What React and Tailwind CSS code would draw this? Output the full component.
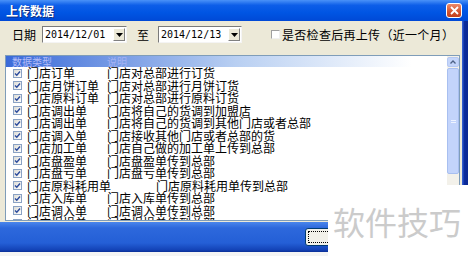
import React from 'react';

const rows = [
  ['门店订单', '门店对总部进行订货'],
  ['门店月饼订单', '门店对总部进行月饼订货'],
  ['门店原料订单', '门店对总部进行原料订货'],
  ['门店调出单', '门店将自己的货调到加盟店'],
  ['门店调出单', '门店将自己的货调到其他门店或者总部'],
  ['门店调入单', '门店接收其他门店或者总部的货'],
  ['门店加工单', '门店自己做的加工单上传到总部'],
  ['门店盘盈单', '门店盘盈单传到总部'],
  ['门店盘亏单', '门店盘亏单传到总部'],
  ['门店原料耗用单', '门店原料耗用单传到总部', true],
  ['门店入库单', '门店入库单传到总部'],
  ['门店调入单', '门店调入单传到总部'],
  ['门店报损单', '门店报损单传到总部'],
];

const CheckBox = () => (
  <span className="w-[9px] h-[9px] shrink-0 border border-[#8aa2c4] bg-[linear-gradient(135deg,#dcdcd6,#fff)] flex items-center justify-center">
    <svg width="7" height="7" viewBox="0 0 7 7">
      <path d="M1 3.5 L2.8 5.3 L6 1.5" fill="none" stroke="#2a4a9c" strokeWidth="1.4" />
    </svg>
  </span>
);

const DateBox = ({ value, w }) => (
  <div className={`h-[17px] ${w} flex items-center bg-white border border-t-[#7a7a7a] border-l-[#7a7a7a] border-b-[#f4f4f4] border-r-[#f4f4f4]`}>
    <span className="flex-1 pl-[2px] font-['DejaVu_Sans_Mono',monospace] text-[10px] leading-none text-black">{value}</span>
    <span className="w-[12px] h-[13px] mr-[1px] bg-[#ece9d8] border border-t-white border-l-white border-b-[#808080] border-r-[#808080] flex items-center justify-center">
      <svg width="7" height="4" viewBox="0 0 7 4"><path d="M0 0 H7 L3.5 4 Z" fill="#000" /></svg>
    </span>
  </div>
);

export default function App() {
  return (
    <div className="relative w-[468px] h-[256px] overflow-hidden bg-white font-['Noto_Sans_CJK_SC',sans-serif] text-[12px] text-black">
      <div className="flex flex-col h-full">
        {/* title bar */}
        <div className="h-[21px] shrink-0 flex items-center justify-between pl-[6px] pr-[6px] bg-[linear-gradient(to_bottom,#4a92f8,#0d5ee8_25%,#0055e3_60%,#0049d6)]">
          <span className="text-white font-bold text-[12px] leading-none [text-shadow:1px_1px_0_#0a2a80]">上传数据</span>
          <span className="w-[16px] h-[15px] rounded-[3px] border border-white bg-[linear-gradient(to_bottom,#ec8a6a,#d4542e_60%,#c2401c)] flex items-center justify-center">
            <svg width="9" height="9" viewBox="0 0 9 9">
              <path d="M1 1 L8 8 M8 1 L1 8" stroke="#fff" strokeWidth="1.8" />
            </svg>
          </span>
        </div>

        <div className="h-[201px] shrink-0 flex">
          {/* body */}
          <div className="w-[462px] bg-[#ece9d8] flex flex-col pt-[5px]">
            <div className="h-[17px] flex items-center">
              <span className="ml-[12px] w-[30px] text-[12px] leading-none">日期</span>
              <DateBox value="2014/12/01" w="w-[85px]" />
              <span className="ml-[10px] w-[21px] text-[12px] leading-none">至</span>
              <DateBox value="2014/12/13" w="w-[84px]" />
              <span className="ml-[29px] w-[9px] h-[9px] bg-white border border-t-[#a0a0a0] border-l-[#a0a0a0] border-b-[#f0f0f0] border-r-[#f0f0f0]" />
              <span className="ml-[2px] text-[12px] leading-none tracking-[0.3px] whitespace-nowrap">是否检查后再上传（近一个月）</span>
            </div>

            {/* list view */}
            <div className="mt-[12px] ml-[5px] w-[455px] h-[166px] border border-[#7f9db9] bg-white flex">
              <div className="flex-1 flex flex-col overflow-hidden">
                <div className="h-[11px] shrink-0 flex items-center bg-[linear-gradient(to_right,#3a6ad8,#b8cff2_52%,#ffffff_92%)]">
                  <span className="ml-[6px] w-[95px] text-[10px] leading-[11px] text-[#b4bcf8]">数据类型</span>
                  <span className="text-[10px] leading-[11px] text-[#a4b2f4]">说明</span>
                </div>
                {rows.map(([name, desc, wide], i) => (
                  <div key={i} className="h-[12.5px] shrink-0 flex items-center pl-[7px]">
                    <CheckBox />
                    <span className={`ml-[5px] ${wide ? 'w-[129px]' : 'w-[80px]'} shrink-0 leading-[12.5px] whitespace-nowrap`}>{name}</span>
                    <span className="leading-[12.5px] whitespace-nowrap">{desc}</span>
                  </div>
                ))}
              </div>
              {/* scrollbar */}
              <div className="w-[12px] shrink-0 bg-[#f3f1ea] flex flex-col pt-[1px]">
                <div className="h-[10px] rounded-[2px] border border-[#b5c8f2] bg-[#c4d5fa] flex items-center justify-center">
                  <svg width="6" height="4" viewBox="0 0 6 4"><path d="M0.5 3.5 L3 1 L5.5 3.5" fill="none" stroke="#4d6185" strokeWidth="1.3" /></svg>
                </div>
                <div className="mt-[1px] h-[106px] rounded-[2px] border border-[#a8bff0] bg-[#c3d4fb] flex flex-col items-center justify-center gap-[1px]">
                  <span className="w-[5px] h-px bg-[#eef3ff]" />
                  <span className="w-[5px] h-px bg-[#eef3ff]" />
                </div>
              </div>
            </div>
          </div>
          {/* right frame */}
          <div className="w-[6px] bg-[linear-gradient(to_right,#3c68d8,#0b2c9e_40%,#0a2890)]" />
        </div>

        {/* bottom blue band */}
        <div className="h-[30px] shrink-0 flex items-center bg-[linear-gradient(to_bottom,#4a86ec,#2d68dc_20%,#245fd6_70%,#1444b8_92%,#0a2e96)]">
          <div className="ml-[305px] w-[40px] h-[18px] rounded-[3px] border border-[#003c74] bg-[#f2f1ea] p-[2px]">
            <div className="w-full h-full border border-dotted border-black" />
          </div>
        </div>
        <div className="flex-1 bg-[#f4f4f4]" />
      </div>

      {/* watermark */}
      <div className="absolute right-0 bottom-0 w-[140px] h-[71px] bg-white flex items-center pl-[5px]">
        <span className="text-[32px] leading-none text-[#cbcbcb] whitespace-nowrap">软件技巧</span>
      </div>
    </div>
  );
}
